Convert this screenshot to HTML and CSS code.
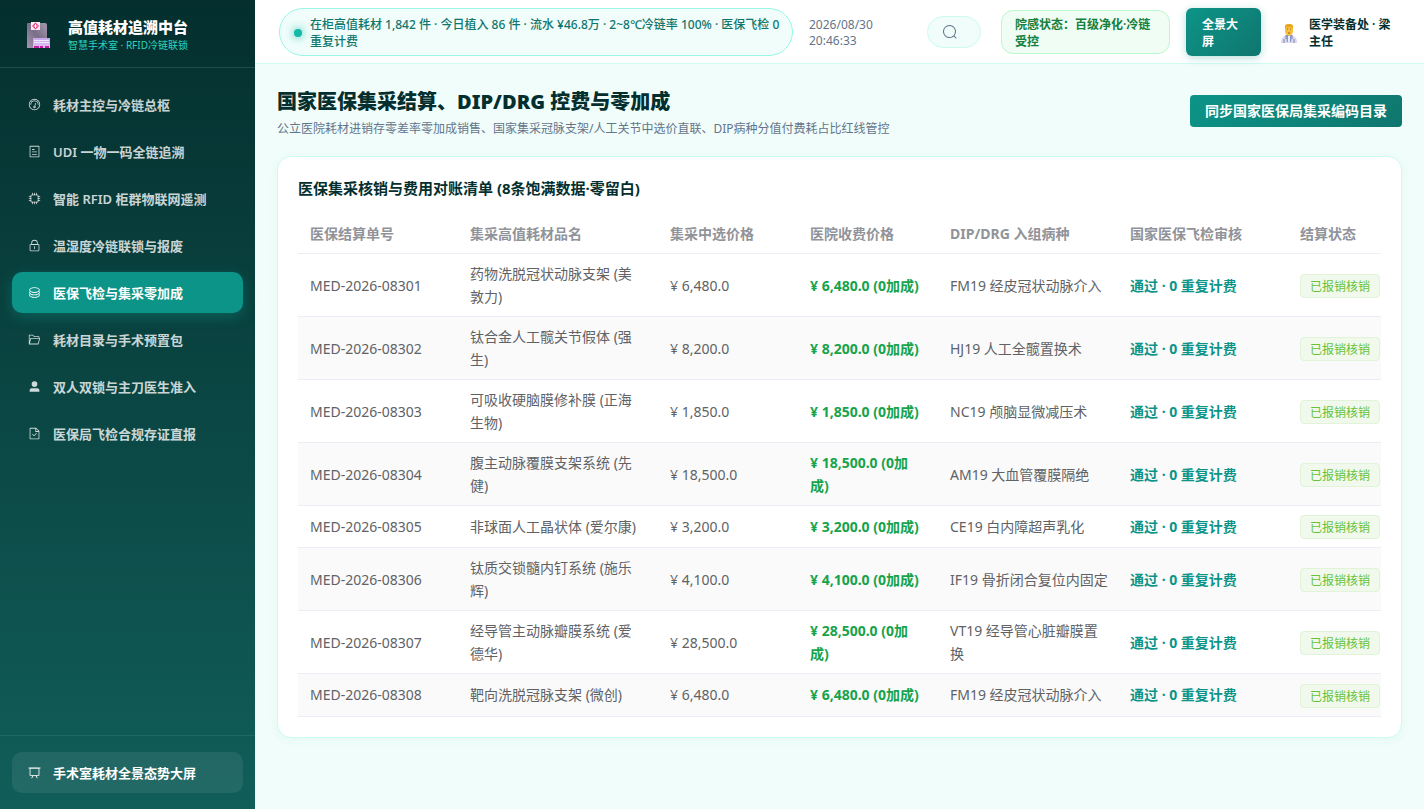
FILE: index.html
```html
<!DOCTYPE html>
<html lang="zh-CN">
<head>
<meta charset="utf-8">
<meta name="viewport" content="width=device-width, initial-scale=1">
<title>高值耗材追溯中台</title>
<link rel="stylesheet" href="styles.css">
</head>
<body>
<div class="app">
  <aside class="sidebar">
    <div class="brand">
      <svg class="brand-logo" viewBox="0 0 32 32" aria-hidden="true">
        <defs><linearGradient id="tower" x1="0" y1="1" x2="1" y2="0"><stop offset="0" stop-color="#a894b0"/><stop offset="0.5" stop-color="#786f88"/><stop offset="1" stop-color="#a59bb0"/></linearGradient>
        <linearGradient id="wing" x1="0" y1="0" x2="0" y2="1"><stop offset="0" stop-color="#c7a5e8"/><stop offset="1" stop-color="#e2c4f6"/></linearGradient></defs>
        <path d="M3 5q0-1 1-1h17q2 0 2 2v23H3z" fill="url(#tower)"/>
        <path d="M7 3h9v8H7z" fill="#fbe9f3"/>
        <path d="M11.500 3.500l3.500 3.500-3.500 3.500L8 7z" fill="#e33a79"/>
        <path d="M11 5h1v1.500h1.500v1H12V9h-1V7.500H9.500v-1H11z" fill="#fff"/>
        <path d="M9 19h17v10H9z" fill="url(#wing)"/>
        <path d="M10 21h15v1H10zm0 2h15v1H10z" fill="#f4e8ff"/>
        <path d="M10 27h5v2h-5zm6 0h3v2h-3zm5 0h4v2h-4z" fill="#c71ca5"/>
      </svg>
      <div>
        <div class="brand-name">高值耗材追溯中台</div>
        <div class="brand-sub">智慧手术室 · RFID冷链联锁</div>
      </div>
    </div>
    <nav class="menu">
      <a class="item" href="#"><svg class="icon" viewBox="0 0 1024 1024"><path d="M512 896a384 384 0 1 0 0-768 384 384 0 0 0 0 768m0 64a448 448 0 1 1 0-896 448 448 0 0 1 0 896"/><path d="M192 512a320 320 0 1 1 640 0 32 32 0 1 1-64 0 256 256 0 1 0-512 0 32 32 0 0 1-64 0"/><path d="M570.432 627.840A96 96 0 1 1 509.568 608l60.992-187.776A32 32 0 1 1 631.424 440zM502.080 734.464a32 32 0 1 0 19.840-60.928 32 32 0 0 0-19.840 60.928"/></svg>耗材主控与冷链总枢</a>
      <a class="item" href="#"><svg class="icon" viewBox="0 0 1024 1024"><path d="M192 128v768h640V128zm-32-64h704a32 32 0 0 1 32 32v832a32 32 0 0 1-32 32H160a32 32 0 0 1-32-32V96a32 32 0 0 1 32-32m160 448h384v64H320zm0-192h192v64H320zm0 384h384v64H320z"/></svg>UDI 一物一码全链追溯</a>
      <a class="item" href="#"><svg class="icon" viewBox="0 0 1024 1024"><path d="M320 256a64 64 0 0 0-64 64v384a64 64 0 0 0 64 64h384a64 64 0 0 0 64-64V320a64 64 0 0 0-64-64zm0-64h384a128 128 0 0 1 128 128v384a128 128 0 0 1-128 128H320a128 128 0 0 1-128-128V320a128 128 0 0 1 128-128"/><path d="M512 96v128M352 96v128M672 96v128M512 800v128M352 800v128M672 800v128M96 512h128M96 352h128M96 672h128M800 512h128M800 352h128M800 672h128" stroke="currentColor" stroke-width="64" stroke-linecap="round"/></svg>智能 RFID 柜群物联网遥测</a>
      <a class="item" href="#"><svg class="icon" viewBox="0 0 1024 1024"><path d="M224 448a32 32 0 0 0-32 32v384a32 32 0 0 0 32 32h576a32 32 0 0 0 32-32V480a32 32 0 0 0-32-32zm0-64h576a96 96 0 0 1 96 96v384a96 96 0 0 1-96 96H224a96 96 0 0 1-96-96V480a96 96 0 0 1 96-96"/><path d="M512 544a32 32 0 0 1 32 32v192a32 32 0 1 1-64 0V576a32 32 0 0 1 32-32m192-160v-64a192 192 0 1 0-384 0v64zM512 64a256 256 0 0 1 256 256v128H256V320A256 256 0 0 1 512 64"/></svg>温湿度冷链联锁与报废</a>
      <a class="item active" href="#" aria-current="page"><svg class="icon" viewBox="0 0 1024 1024"><path d="m161.920 580.736 29.888 58.880C171.328 659.776 160 681.728 160 704c0 82.304 155.328 160 352 160s352-77.696 352-160c0-22.272-11.392-44.160-31.808-64.320l30.464-58.432C903.936 615.808 928 657.664 928 704c0 129.728-188.544 224-416 224S96 833.728 96 704c0-46.592 24.320-88.576 65.920-123.264"/><path d="m161.920 388.736 29.888 58.880C171.328 467.840 160 489.792 160 512c0 82.304 155.328 160 352 160s352-77.696 352-160c0-22.272-11.392-44.160-31.808-64.320l30.464-58.432C903.936 423.808 928 465.664 928 512c0 129.728-188.544 224-416 224S96 641.728 96 512c0-46.592 24.320-88.576 65.920-123.264"/><path d="M512 544c-227.456 0-416-94.272-416-224S284.544 96 512 96s416 94.272 416 224-188.544 224-416 224m0-64c196.672 0 352-77.696 352-160S708.672 160 512 160s-352 77.696-352 160 155.328 160 352 160"/></svg>医保飞检与集采零加成</a>
      <a class="item" href="#"><svg class="icon" viewBox="0 0 1024 1024"><path d="M878.080 448H241.920l-96 384h636.160zM832 384v-64H485.760L357.504 192H128v448l57.344-229.248A32 32 0 0 1 216.320 384zm-24.960 512H96a32 32 0 0 1-32-32V160a32 32 0 0 1 32-32h287.872l128.384 128H864a32 32 0 0 1 32 32v96h23.040a32 32 0 0 1 31.040 39.744l-112 448A32 32 0 0 1 807.040 896"/></svg>耗材目录与手术预置包</a>
      <a class="item" href="#"><svg class="icon" viewBox="0 0 1024 1024"><path d="M288 320a224 224 0 1 0 448 0 224 224 0 1 0-448 0m544 608H160a32 32 0 0 1-32-32v-96a160 160 0 0 1 160-160h448a160 160 0 0 1 160 160v96a32 32 0 0 1-32 32z"/></svg>双人双锁与主刀医生准入</a>
      <a class="item" href="#"><svg class="icon" viewBox="0 0 1024 1024"><path d="M805.504 320 640 154.496V320zM832 384H576V128H192v768h640zM160 64h480l256 256v608a32 32 0 0 1-32 32H160a32 32 0 0 1-32-32V96a32 32 0 0 1 32-32m318.400 582.144 180.992-180.992L704.640 510.400 478.400 736.640 320 578.304l45.248-45.312z"/></svg>医保局飞检合规存证直报</a>
    </nav>
    <div class="sidebar-foot">
      <a class="item screen-link" href="#"><svg class="icon" viewBox="0 0 1024 1024"><path d="M32 128h960v64H32z"/><path d="M192 192v512h640V192zm-64-64h768v608a32 32 0 0 1-32 32H160a32 32 0 0 1-32-32z"/><path d="M322.176 960H248.320l144.640-250.560 55.424 32zm453.888 0h-73.856L576 741.440l55.424-32z"/></svg>手术室耗材全景态势大屏</a>
    </div>
  </aside>
  <div class="main">
    <header class="topbar">
      <div class="ticker"><span class="dot"></span><span>在柜高值耗材 1,842 件 · 今日植入 86 件 · 流水 ¥46.8万 · 2~8℃冷链率 100% · 医保飞检 0 重复计费</span></div>
      <time class="clock">2026/08/30 20:46:33</time>
      <button class="search" type="button" aria-label="搜索"><svg viewBox="0 0 1024 1024"><path d="m795.904 750.720 124.992 124.928a32 32 0 0 1-45.248 45.248L750.656 795.904a416 416 0 1 1 45.248-45.248zM480 832a352 352 0 1 0 0-704 352 352 0 0 0 0 704"/></svg></button>
      <div class="status">院感状态：百级净化·冷链受控</div>
      <button class="screen-btn" type="button">全景大屏</button>
      <div class="user">
        <svg class="avatar" viewBox="0 0 24 24" aria-hidden="true">
          <path d="M4 22c0-5 2-7 6-8h4c4 1 6 3 6 8z" fill="#dcd8f0"/>
          <path d="M9 14h6l-1 7h-4z" fill="#7f9bd4"/>
          <path d="M11 15h2v6h-2z" fill="#e9eefb"/>
          <path d="M9 14v4m6-4v4M7 18v4m10-4v4" stroke="#8984ae" fill="none"/>
          <path d="M8 7q0-4 4-4t4 4v3q0 4-4 5-4-1-4-5z" fill="#f7bd3c"/>
          <path d="M8 7q-1-4 4-4t4 4l-2-1h-4z" fill="#e9a51c"/>
          <path d="M10 8h1m2 0h1m-3 4h2" stroke="#9c6420"/>
        </svg>
        <span>医学装备处 · 梁主任</span>
      </div>
    </header>
    <main class="content">
      <div class="page-head">
        <div>
          <h1>国家医保集采结算、DIP/DRG 控费与零加成</h1>
          <p>公立医院耗材进销存零差率零加成销售、国家集采冠脉支架/人工关节中选价直联、DIP病种分值付费耗占比红线管控</p>
        </div>
        <button class="sync" type="button">同步国家医保局集采编码目录</button>
      </div>
      <section class="card">
        <h2>医保集采核销与费用对账清单 (8条饱满数据·零留白)</h2>
        <table>
          <colgroup><col class="c-no"><col class="c-name"><col class="c-price"><col class="c-price"><col class="c-group"><col class="c-audit"><col class="c-state"></colgroup>
          <thead><tr><th>医保结算单号</th><th>集采高值耗材品名</th><th>集采中选价格</th><th>医院收费价格</th><th>DIP/DRG 入组病种</th><th>国家医保飞检审核</th><th>结算状态</th></tr></thead>
          <tbody>
            <tr><td>MED-2026-08301</td><td class="name">药物洗脱冠状动脉支架 (美敦力)</td><td>¥ 6,480.0</td><td class="fee">¥ 6,480.0 (0加成)</td><td class="group">FM19 经皮冠状动脉介入</td><td class="audit">通过 · 0 重复计费</td><td><span class="tag">已报销核销</span></td></tr>
            <tr><td>MED-2026-08302</td><td class="name">钛合金人工髋关节假体 (强生)</td><td>¥ 8,200.0</td><td class="fee">¥ 8,200.0 (0加成)</td><td class="group">HJ19 人工全髋置换术</td><td class="audit">通过 · 0 重复计费</td><td><span class="tag">已报销核销</span></td></tr>
            <tr><td>MED-2026-08303</td><td class="name">可吸收硬脑膜修补膜 (正海生物)</td><td>¥ 1,850.0</td><td class="fee">¥ 1,850.0 (0加成)</td><td class="group">NC19 颅脑显微减压术</td><td class="audit">通过 · 0 重复计费</td><td><span class="tag">已报销核销</span></td></tr>
            <tr><td>MED-2026-08304</td><td class="name">腹主动脉覆膜支架系统 (先健)</td><td>¥ 18,500.0</td><td class="fee">¥ 18,500.0 (0加成)</td><td class="group">AM19 大血管覆膜隔绝</td><td class="audit">通过 · 0 重复计费</td><td><span class="tag">已报销核销</span></td></tr>
            <tr><td>MED-2026-08305</td><td class="name">非球面人工晶状体 (爱尔康)</td><td>¥ 3,200.0</td><td class="fee">¥ 3,200.0 (0加成)</td><td class="group">CE19 白内障超声乳化</td><td class="audit">通过 · 0 重复计费</td><td><span class="tag">已报销核销</span></td></tr>
            <tr><td>MED-2026-08306</td><td class="name">钛质交锁髓内钉系统 (施乐辉)</td><td>¥ 4,100.0</td><td class="fee">¥ 4,100.0 (0加成)</td><td class="group">IF19 骨折闭合复位内固定</td><td class="audit">通过 · 0 重复计费</td><td><span class="tag">已报销核销</span></td></tr>
            <tr><td>MED-2026-08307</td><td class="name">经导管主动脉瓣膜系统 (爱德华)</td><td>¥ 28,500.0</td><td class="fee">¥ 28,500.0 (0加成)</td><td class="group">VT19 经导管心脏瓣膜置换</td><td class="audit">通过 · 0 重复计费</td><td><span class="tag">已报销核销</span></td></tr>
            <tr><td>MED-2026-08308</td><td class="name">靶向洗脱冠脉支架 (微创)</td><td>¥ 6,480.0</td><td class="fee">¥ 6,480.0 (0加成)</td><td class="group">FM19 经皮冠状动脉介入</td><td class="audit">通过 · 0 重复计费</td><td><span class="tag">已报销核销</span></td></tr>
          </tbody>
        </table>
      </section>
    </main>
  </div>
</div>
</body>
</html>
```

FILE: styles.css
```css
* { box-sizing: border-box; }
body, h1, h2, p { margin: 0; }
body {
  font-family: "Noto Sans", "Noto Sans CJK SC", sans-serif;
  font-size: 14px;
  color: #042f2e;
  background: #f0fdfa;
}
button { font: inherit; cursor: pointer; }
a { text-decoration: none; }
.app { display: flex; min-height: 100vh; }

/* Sidebar */
.sidebar {
  flex: 0 0 255px;
  display: flex;
  flex-direction: column;
  background: linear-gradient(180deg, #042f2e 0%, #115e59 100%);
}
.brand {
  display: flex;
  align-items: center;
  gap: 12px;
  height: 68px;
  padding: 2px 24px 0;
  border-bottom: 1px solid rgba(255, 255, 255, 0.12);
}
.brand-logo { width: 32px; height: 32px; }
.brand-name { font-size: 15px; line-height: 20px; font-weight: 900; color: #fff; }
.brand-sub { font-size: 10px; line-height: 16px; color: #2dd4bf; }
.menu { flex: 1; display: flex; flex-direction: column; gap: 6px; padding: 16px 12px; }
.item {
  display: flex;
  align-items: center;
  gap: 12px;
  height: 41px;
  padding: 0 16px;
  border-radius: 10px;
  font-size: 13px;
  font-weight: 600;
  color: rgba(255, 255, 255, 0.8);
}
.icon { width: 13px; height: 13px; fill: currentColor; }
.item.active { background: #0d9488; color: #fff; font-weight: 700; box-shadow: 0 4px 14px rgba(13, 148, 136, 0.4); }
.sidebar-foot { padding: 16px 12px; border-top: 1px solid rgba(255, 255, 255, 0.08); }
.item.screen-link { background: rgba(255, 255, 255, 0.08); color: #fff; }

/* Top bar */
.main { flex: 1; min-width: 0; }
.topbar {
  display: flex;
  align-items: center;
  height: 64px;
  padding: 0 24px;
  background: #fff;
  border-bottom: 1px solid #ccfbf1;
  font-size: 12px;
  line-height: 17px;
  font-weight: 600;
}
.ticker {
  flex: 0 1 514px;
  display: flex;
  align-items: center;
  gap: 8px;
  margin-right: 16px;
  padding: 7px 8px 5px 14px;
  border: 1px solid #99f6e4;
  border-radius: 24px;
  background: #f0fdfa;
  font-weight: 500;
  color: #0f766e;
}
.dot { flex: none; width: 8px; height: 8px; border-radius: 50%; background: #14b8a6; box-shadow: 0 0 8px #14b8a6; }
.clock { width: 70px; padding-top: 2px; font-weight: 400; line-height: 16px; color: #64748b; }
.search {
  display: flex;
  align-items: center;
  width: 54px;
  height: 32px;
  margin-left: auto;
  margin-right: 20px;
  padding: 0 14px;
  border: 1px solid #ccfbf1;
  border-radius: 16px;
  background: #f0fdfa;
}
.search svg { width: 16px; height: 16px; fill: #64748b; }
.status {
  width: 169px;
  margin-right: 16px;
  padding: 5px 13px 3px;
  border: 1px solid #bbf7d0;
  border-radius: 12px;
  background: #f0fdf4;
  color: #15803d;
}
.screen-btn {
  width: 75px;
  padding: 8px 16px 6px;
  border: 0;
  border-radius: 6px;
  text-align: left;
  font-weight: 700;
  color: #fff;
  background: linear-gradient(135deg, #0d9488, #0f766e);
  box-shadow: 0 2px 8px rgba(13, 148, 136, 0.3);
}
.user { display: flex; align-items: center; gap: 8px; width: 123px; margin-left: 16px; padding-top: 2px; }
.avatar { flex: none; width: 24px; height: 24px; }

/* Page */
.content { padding: 22px; }
.page-head { display: flex; align-items: center; justify-content: space-between; margin-bottom: 19px; }
h1 { font-size: 20px; line-height: 32px; font-weight: 900; }
.page-head p { font-size: 12px; line-height: 17px; margin-top: 2px; color: #64748b; }
.sync {
  height: 32px;
  margin-bottom: 2px;
  padding: 0 15px 2px;
  border: 0;
  border-radius: 4px;
  font-weight: 700;
  color: #fff;
  background: linear-gradient(135deg, #0d9488, #0f766e);
}
.card {
  padding: 20px;
  border: 1px solid #ccfbf1;
  border-radius: 14px;
  background: #fff;
  box-shadow: 0 2px 10px rgba(13, 148, 136, 0.05);
}
h2 { font-size: 15px; line-height: 22px; font-weight: 700; margin-bottom: 14px; }
table { width: 100%; table-layout: fixed; border-collapse: separate; border-spacing: 0; color: #606266; line-height: 23px; }
.c-no { width: 160px; }
.c-name { width: 200px; }
.c-price { width: 140px; }
.c-group { width: 180px; }
.c-audit { width: 170px; }
th, td { padding: 8px 12px; text-align: left; border-bottom: 1px solid #ebeef5; }
th { padding-top: 9px; color: #909399; font-weight: 700; }
td.name { padding-right: 16px; }
td.group { padding-right: 8px; }
tbody tr:nth-child(even) { background: #fafafa; }
.fee { color: #16a34a; font-weight: 700; }
.audit { color: #0d9488; font-weight: 700; }
td:last-child { padding-right: 0; }
.tag {
  display: inline-block;
  height: 24px;
  padding: 0 9px;
  border: 1px solid #e1f3d8;
  border-radius: 4px;
  background: #f0f9eb;
  color: #67c23a;
  font-size: 12px;
  line-height: 24px;
  vertical-align: middle;
  white-space: nowrap;
}
```
